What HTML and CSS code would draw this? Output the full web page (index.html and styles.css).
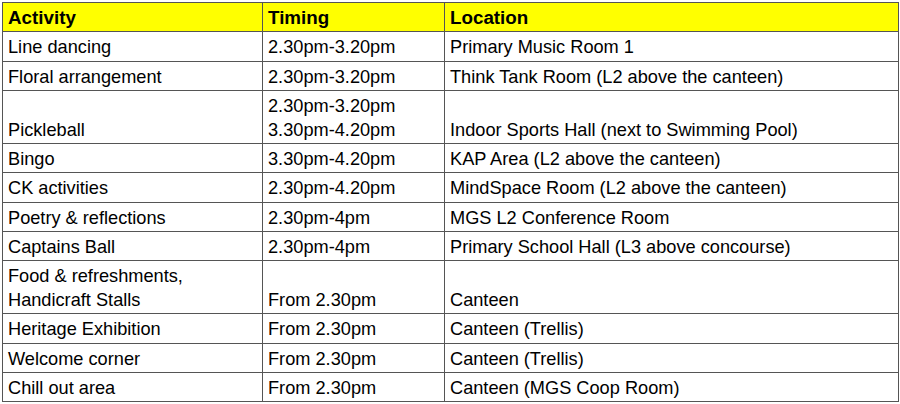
FILE: index.html
```html
<!DOCTYPE html>
<html>
<head>
<meta charset="utf-8">
<link rel="stylesheet" href="styles.css">
</head>
<body>
<div class="wrap">
<table class="sched">
  <colgroup>
    <col class="c1"><col class="c2"><col class="c3">
  </colgroup>
  <thead>
    <tr><th>Activity</th><th>Timing</th><th>Location</th></tr>
  </thead>
  <tbody>
    <tr><td>Line dancing</td><td>2.30pm-3.20pm</td><td>Primary Music Room 1</td></tr>
    <tr><td>Floral arrangement</td><td>2.30pm-3.20pm</td><td>Think Tank Room (L2 above the canteen)</td></tr>
    <tr><td>Pickleball</td><td>2.30pm-3.20pm<br>3.30pm-4.20pm</td><td>Indoor Sports Hall (next to Swimming Pool)</td></tr>
    <tr><td>Bingo</td><td>3.30pm-4.20pm</td><td>KAP Area (L2 above the canteen)</td></tr>
    <tr><td>CK activities</td><td>2.30pm-4.20pm</td><td>MindSpace Room (L2 above the canteen)</td></tr>
    <tr><td>Poetry &amp; reflections</td><td>2.30pm-4pm</td><td>MGS L2 Conference Room</td></tr>
    <tr><td>Captains Ball</td><td>2.30pm-4pm</td><td>Primary School Hall (L3 above concourse)</td></tr>
    <tr><td>Food &amp; refreshments,<br>Handicraft Stalls</td><td>From 2.30pm</td><td>Canteen</td></tr>
    <tr><td>Heritage Exhibition</td><td>From 2.30pm</td><td>Canteen (Trellis)</td></tr>
    <tr><td>Welcome corner</td><td>From 2.30pm</td><td>Canteen (Trellis)</td></tr>
    <tr><td>Chill out area</td><td>From 2.30pm</td><td>Canteen (MGS Coop Room)</td></tr>
  </tbody>
</table>
</div>
</body>
</html>
```

FILE: styles.css
```css
html, body {
  margin: 0;
  padding: 0;
  background: #ffffff;
}
.wrap {
  padding: 2px 0 0 2px;
}
.sched {
  border-collapse: collapse;
  table-layout: fixed;
  width: 896px;
  font-family: "Liberation Sans", Arial, sans-serif;
  font-size: 18.2px;
  line-height: 23.8px;
  color: #000000;
}
.c1 { width: 260px; }
.c2 { width: 182px; }
.c3 { width: 454px; }
.sched th,
.sched td {
  border: 1px solid #555555;
  padding: 4px 5px 0.5px 5px;
  text-align: left;
  vertical-align: bottom;
  white-space: nowrap;
}
.sched th {
  background: #ffff00;
  font-weight: bold;
  font-size: 18.8px;
  padding: 2.5px 5px 2px 5px;
}
```
